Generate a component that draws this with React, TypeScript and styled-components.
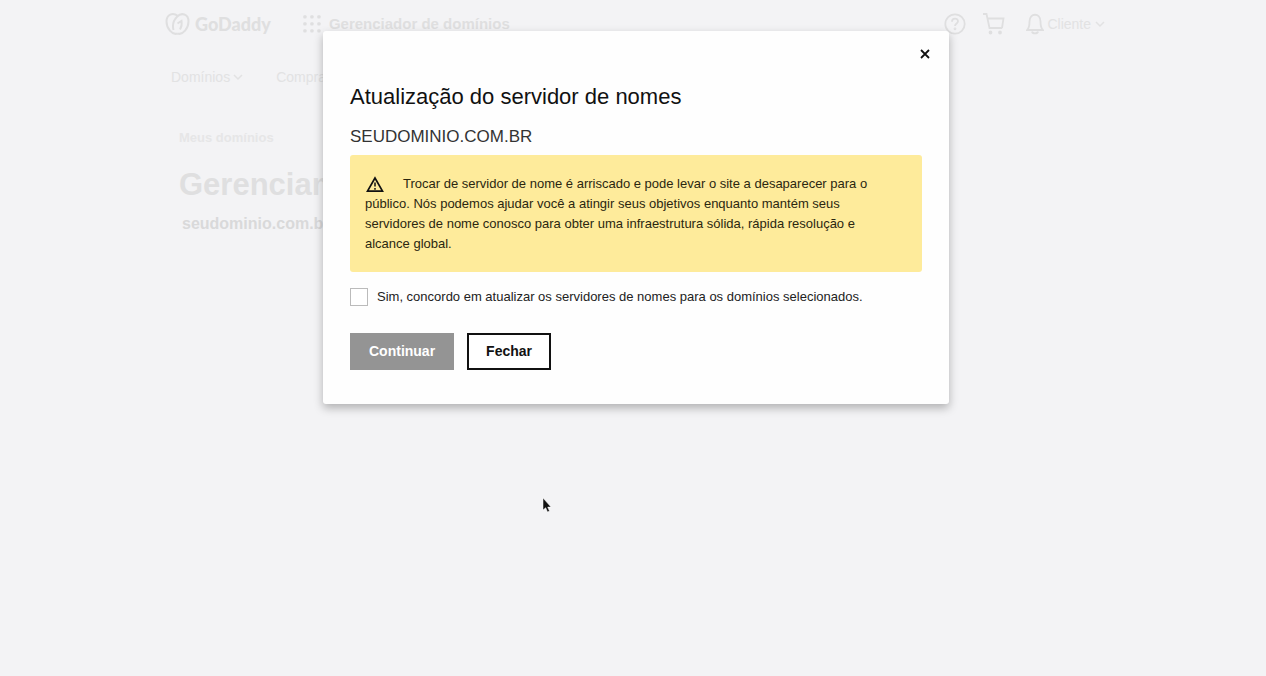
import React, { useState } from "react";
import styled, { createGlobalStyle } from "styled-components";

const GlobalStyle = createGlobalStyle`
  *, *::before, *::after { box-sizing: border-box; }
  body {
    margin: 0;
    background: #f3f3f5;
    color: #111;
    font-family: "Liberation Sans", Arial, Helvetica, sans-serif;
    font-size: 14px;
  }
  h1, h2, p { margin: 0; }
`;

const Page = styled.div`
  position: relative;
  min-height: 100vh;
  overflow: hidden;
`;

const Shell = styled.div`
  max-width: 946px;
  margin: 0 auto;
  padding-left: 5px;
  color: #dfdfe0;
`;

const TopBar = styled.header`
  display: flex;
  align-items: center;
  height: 47px;
`;

const Brand = styled.a`
  display: flex;
  align-items: center;
  gap: 5px;
  margin-right: 32px;
  color: inherit;
  font: 900 18px/24px Lato, sans-serif;
  text-decoration: none;
`;

const AppTitle = styled.p`
  flex: 1;
  margin-left: 8px;
  font-size: 15px;
  font-weight: 700;
  line-height: 20px;
`;

const Tools = styled.div`
  display: flex;
  align-items: center;
  gap: 17px;
`;

const IconButton = styled.button`
  display: flex;
  align-items: center;
  gap: 3px;
  padding: 0;
  border: 0;
  background: none;
  color: inherit;
  font: inherit;
`;

const UserTools = styled.div`
  display: flex;
  align-items: center;
  gap: 3px;
  margin-left: 4px;
`;

const Account = styled(IconButton)`
  color: #e2e2e3;
`;

const Nav = styled.nav`
  display: flex;
  gap: 32px;
  padding: 20px 0 0 6px;
`;

const NavLink = styled.a`
  display: flex;
  align-items: center;
  gap: 2px;
  color: #e2e2e3;
  line-height: 20px;
  text-decoration: none;
`;

const Main = styled.main`
  padding: 41px 0 0 14px;
`;

const Crumb = styled.a`
  display: block;
  color: #e6e6e7;
  font-size: 13px;
  font-weight: 700;
  line-height: 20px;
  text-decoration: none;
`;

const PageTitle = styled.h1`
  margin-top: 16px;
  font-size: 31px;
  line-height: 42px;
`;

const DomainName = styled.p`
  padding: 8px 0 0 3px;
  color: #d9d9da;
  font-size: 16px;
  font-weight: 700;
  line-height: 20px;
`;

const Overlay = styled.div`
  position: absolute;
  inset: 0;
  display: flex;
  justify-content: center;
  align-items: flex-start;
  padding: 31px 0 31px 6px;
`;

const Dialog = styled.section`
  width: 100%;
  max-width: 626px;
  padding: 15px 27px 34px;
  border-radius: 3px;
  background: #fefefe;
  box-shadow: 0 4px 10px rgba(0, 0, 0, 0.28);
`;

const CloseButton = styled.button`
  display: flex;
  margin: 0 -11px 0 auto;
  padding: 3px;
  border: 0;
  background: none;
  color: #111;
`;

const DialogTitle = styled.h2`
  margin-top: 21px;
  font-size: 22px;
  font-weight: 400;
  line-height: 28px;
`;

const DialogDomain = styled.p`
  margin-top: 16px;
  color: #333;
  font-size: 17px;
  line-height: 20px;
`;

const Warning = styled.p`
  margin-top: 8px;
  padding: 19px 30px 18px 15px;
  border-radius: 3px;
  background: #feeb9b;
  color: #2b2710;
  font-size: 13px;
  line-height: 20px;

  svg {
    margin: 0 19px 0 1px;
    vertical-align: -5px;
  }
`;

const Agreement = styled.label`
  display: flex;
  align-items: center;
  gap: 9px;
  margin-top: 15px;
  color: #222;
  font-size: 13px;
  line-height: 20px;
`;

const Checkbox = styled.input`
  appearance: none;
  width: 18px;
  height: 18px;
  margin: 0;
  border: 1px solid #bbb;
  background: #fff;

  &:checked {
    background: #111;
  }
`;

const Actions = styled.div`
  display: flex;
  gap: 13px;
  margin-top: 26px;
`;

const Button = styled.button<{ $outlined?: boolean }>`
  height: 37px;
  padding: 0 17px 2px;
  border: 2px solid ${(p) => (p.$outlined ? "#111" : "#949494")};
  background: ${(p) => (p.$outlined ? "#fff" : "#949494")};
  color: ${(p) => (p.$outlined ? "#111" : "#fff")};
  font: inherit;
  font-weight: 700;
`;

const Pointer = styled.svg`
  position: absolute;
  left: 541px;
  top: 496px;
`;

const Chevron = () => (
  <svg width="12" height="12" viewBox="0 0 12 12" fill="none" stroke="currentColor" strokeWidth="1.5" aria-hidden="true">
    <path d="M2 4l4 4 4-4" />
  </svg>
);

const Logo = () => (
  <svg width="25" height="24" viewBox="0 0 25 24" fill="none" stroke="currentColor" strokeWidth="2" aria-hidden="true">
    <path d="M12.500 21.500C7 23.500 1.500 16 1.500 9.500 1.500 2.500 7.500 0 13 4M12.500 21.500C18 23.500 23.500 16 23.500 9.500 23.500 2 16.500 0 12 4.800 8.500 8.500 7 12.500 8.500 18" />
    <path d="M12.500 11.500l4-2.500c.5 3 0 6-1.500 8.500" />
  </svg>
);

const AppGrid = () => (
  <svg width="18" height="18" viewBox="0 0 18 18" fill="currentColor" aria-hidden="true">
    {[0, 7, 14].map((y) => [0, 7, 14].map((x) => <rect key={`${x}-${y}`} x={x + 0.3} y={y + 0.3} width="3.300" height="3.300" rx="1" />))}
  </svg>
);

const HelpIcon = () => (
  <svg width="22" height="22" viewBox="0 0 22 22" fill="none" stroke="currentColor" strokeWidth="1.800" aria-hidden="true">
    <circle cx="11" cy="11" r="9.700" />
    <path d="M8 8.800c0-4 6-4 6-.6 0 2.300-3 2.200-3 4.800" />
    <circle cx="11" cy="15.800" r=".5" />
  </svg>
);

const CartIcon = () => (
  <svg width="22" height="22" viewBox="0 0 22 22" fill="none" stroke="currentColor" strokeWidth="1.800" aria-hidden="true">
    <path d="M0 1h3.500l3 14h12.500M4.500 5.500h16l-1.500 9.500" />
    <circle cx="7.500" cy="19.500" r="1" />
    <circle cx="17" cy="19.500" r="1" />
  </svg>
);

const BellIcon = () => (
  <svg width="18" height="22" viewBox="0 0 18 22" fill="none" stroke="currentColor" strokeWidth="1.800" aria-hidden="true">
    <path d="M1.200 17c2-2 2.300-4 2.300-8.500 0-9 11-9 11 0 0 4.500.3 6.500 2.300 8.500zM6 18.500c.5 2.500 5.500 2.500 6 0" />
  </svg>
);

const WarningIcon = () => (
  <svg width="18" height="17" viewBox="0 0 18 17" fill="none" stroke="#111" strokeWidth="1.700" aria-hidden="true">
    <path d="M9 2L1.500 15.200h15z" />
    <path d="M9 6.500v4M9 12v1.700" strokeWidth="1.500" />
  </svg>
);

const CloseIcon = () => (
  <svg width="10" height="10" viewBox="0 0 10 10" fill="none" stroke="currentColor" strokeWidth="1.800" aria-hidden="true">
    <path d="M1 1l8 8M9 1L1 9" />
  </svg>
);

export default function App() {
  const [agreed, setAgreed] = useState(false);

  return (
    <Page>
      <GlobalStyle />
      <Shell>
        <TopBar>
          <Brand href="#">
            <Logo />
            GoDaddy
          </Brand>
          <AppGrid />
          <AppTitle>Gerenciador de domínios</AppTitle>
          <Tools>
            <IconButton aria-label="Ajuda"><HelpIcon /></IconButton>
            <IconButton aria-label="Carrinho"><CartIcon /></IconButton>
            <UserTools>
              <IconButton aria-label="Notificações"><BellIcon /></IconButton>
              <Account>Cliente <Chevron /></Account>
            </UserTools>
          </Tools>
        </TopBar>
        <Nav>
          <NavLink href="#">Domínios <Chevron /></NavLink>
          <NavLink href="#">Comprar</NavLink>
        </Nav>
        <Main>
          <Crumb href="#">Meus domínios</Crumb>
          <PageTitle>Gerenciam</PageTitle>
          <DomainName>seudominio.com.br</DomainName>
        </Main>
      </Shell>

      <Overlay>
        <Dialog role="dialog" aria-labelledby="dialog-title">
          <CloseButton aria-label="Fechar janela"><CloseIcon /></CloseButton>
          <DialogTitle id="dialog-title">Atualização do servidor de nomes</DialogTitle>
          <DialogDomain>SEUDOMINIO.COM.BR</DialogDomain>
          <Warning>
            <WarningIcon />
            Trocar de servidor de nome é arriscado e pode levar o site a desaparecer para o público. Nós podemos
            ajudar você a atingir seus objetivos enquanto mantém seus servidores de nome conosco para obter uma
            infraestrutura sólida, rápida resolução e alcance global.
          </Warning>
          <Agreement>
            <Checkbox type="checkbox" checked={agreed} onChange={(e) => setAgreed(e.target.checked)} />
            Sim, concordo em atualizar os servidores de nomes para os domínios selecionados.
          </Agreement>
          <Actions>
            <Button disabled={!agreed}>Continuar</Button>
            <Button $outlined>Fechar</Button>
          </Actions>
        </Dialog>
      </Overlay>

      <Pointer width="12" height="18" viewBox="0 0 12 18" aria-hidden="true">
        <path d="M2 2v12l2.700-2.300L6.500 16l2-.9-1.800-4H10z" fill="#111" stroke="#fff" strokeWidth=".5" />
      </Pointer>
    </Page>
  );
}
